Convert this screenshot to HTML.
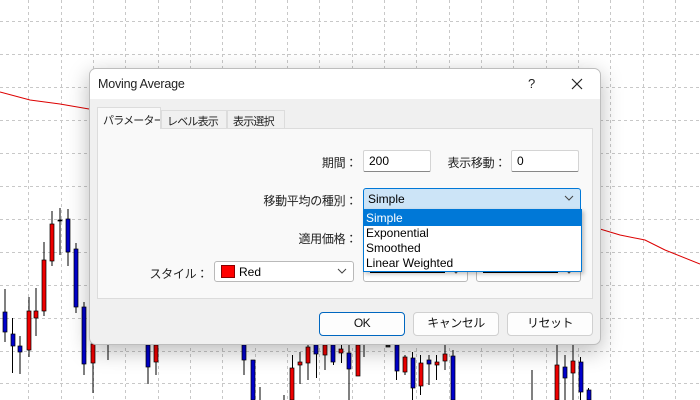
<!DOCTYPE html>
<html><head><meta charset="utf-8"><style>
*{margin:0;padding:0;box-sizing:border-box}
body{width:700px;height:400px;overflow:hidden;background:#fff;position:relative;font-family:"Liberation Sans","Noto Sans CJK JP",sans-serif;font-size:12px;color:#000}
.a{position:absolute}
.lbl{position:absolute;font-size:12px;color:#222;white-space:nowrap;text-align:right;letter-spacing:-0.3px}
.inp{position:absolute;background:#fff;border:1px solid #d4d4d4;border-bottom:1px solid #888;font-size:12px;padding:3px 0 0 5px;border-radius:2px}
.cb{position:absolute;background:#fff;border:1px solid #b9b9b9;border-radius:3px}
.chev{position:absolute;right:6px;top:5px;width:10px;height:8px}
.btn{position:absolute;background:#fdfdfd;border:1px solid #d0d0d0;border-radius:4px;text-align:center;font-size:12px;line-height:21px;color:#111;letter-spacing:-0.5px}
.tab{position:absolute;white-space:nowrap;font-size:11px;letter-spacing:-0.8px;color:#222;border:1px solid #dcdcdc;border-bottom:none;overflow:hidden}
</style></head><body>
<svg class="a" style="left:0;top:0" width="700" height="400">
<g stroke="#c8c8c8" stroke-dasharray="3,3" stroke-width="1">
<line x1="28.5" y1="0" x2="28.5" y2="400"/><line x1="61.5" y1="0" x2="61.5" y2="400"/><line x1="93.5" y1="0" x2="93.5" y2="400"/><line x1="125.5" y1="0" x2="125.5" y2="400"/><line x1="158.5" y1="0" x2="158.5" y2="400"/><line x1="190.5" y1="0" x2="190.5" y2="400"/><line x1="222.5" y1="0" x2="222.5" y2="400"/><line x1="255.5" y1="0" x2="255.5" y2="400"/><line x1="287.5" y1="0" x2="287.5" y2="400"/><line x1="319.5" y1="0" x2="319.5" y2="400"/><line x1="352.5" y1="0" x2="352.5" y2="400"/><line x1="384.5" y1="0" x2="384.5" y2="400"/><line x1="416.5" y1="0" x2="416.5" y2="400"/><line x1="449.5" y1="0" x2="449.5" y2="400"/><line x1="481.5" y1="0" x2="481.5" y2="400"/><line x1="513.5" y1="0" x2="513.5" y2="400"/><line x1="546.5" y1="0" x2="546.5" y2="400"/><line x1="578.5" y1="0" x2="578.5" y2="400"/><line x1="610.5" y1="0" x2="610.5" y2="400"/><line x1="643.5" y1="0" x2="643.5" y2="400"/><line x1="675.5" y1="0" x2="675.5" y2="400"/>
<line x1="0" y1="21.5" x2="700" y2="21.5"/><line x1="0" y1="54.5" x2="700" y2="54.5"/><line x1="0" y1="87.5" x2="700" y2="87.5"/><line x1="0" y1="120.5" x2="700" y2="120.5"/><line x1="0" y1="153.5" x2="700" y2="153.5"/><line x1="0" y1="186.5" x2="700" y2="186.5"/><line x1="0" y1="219.5" x2="700" y2="219.5"/><line x1="0" y1="252.5" x2="700" y2="252.5"/><line x1="0" y1="285.5" x2="700" y2="285.5"/><line x1="0" y1="318.5" x2="700" y2="318.5"/><line x1="0" y1="351.5" x2="700" y2="351.5"/><line x1="0" y1="383.5" x2="700" y2="383.5"/>
</g>
<polyline points="0,92 30,100 60,104 89,109" fill="none" stroke="#d00" stroke-width="1"/>
<polyline points="590,226 620,235 645,240 665,250 700,264" fill="none" stroke="#d00" stroke-width="1"/>
<g stroke="#000" stroke-width="1">
<line x1="5" y1="289" x2="5" y2="342"/><line x1="12.5" y1="318" x2="12.5" y2="373"/><line x1="20" y1="336" x2="20" y2="374"/><line x1="29" y1="297" x2="29" y2="357"/><line x1="36" y1="288" x2="36" y2="336"/><line x1="44" y1="242" x2="44" y2="316"/><line x1="52" y1="211" x2="52" y2="266"/><line x1="60" y1="208" x2="60" y2="255"/><line x1="68" y1="209" x2="68" y2="266"/><line x1="76" y1="243" x2="76" y2="313"/><line x1="84" y1="302" x2="84" y2="375"/><line x1="93" y1="340" x2="93" y2="393"/>
<line x1="108" y1="345" x2="108" y2="360"/><line x1="148" y1="345" x2="148" y2="384"/><line x1="156" y1="345" x2="156" y2="375"/>
<line x1="244" y1="345" x2="244" y2="375"/><line x1="260" y1="387" x2="260" y2="400"/><line x1="284" y1="395" x2="284" y2="400"/><line x1="292.5" y1="355" x2="292.5" y2="400"/><line x1="300" y1="352" x2="300" y2="384"/><line x1="308" y1="345" x2="308" y2="380"/><line x1="316.5" y1="345" x2="316.5" y2="378"/><line x1="325" y1="345" x2="325" y2="370"/><line x1="333.5" y1="345" x2="333.5" y2="365"/><line x1="341.5" y1="345" x2="341.5" y2="363"/><line x1="349" y1="345" x2="349" y2="400"/><line x1="358" y1="345" x2="358" y2="376"/><line x1="364" y1="345" x2="364" y2="357"/><line x1="396.5" y1="345" x2="396.5" y2="380"/><line x1="405" y1="355" x2="405" y2="375"/><line x1="412.5" y1="352" x2="412.5" y2="400"/><line x1="420.5" y1="355" x2="420.5" y2="395"/><line x1="429" y1="355" x2="429" y2="385"/><line x1="436.5" y1="355" x2="436.5" y2="380"/><line x1="445" y1="345" x2="445" y2="370"/><line x1="453" y1="350" x2="453" y2="400"/><line x1="532" y1="370" x2="532" y2="400"/><line x1="557" y1="345" x2="557" y2="400"/><line x1="565" y1="355" x2="565" y2="400"/><line x1="573" y1="345" x2="573" y2="400"/><line x1="580.5" y1="357" x2="580.5" y2="400"/><line x1="588.5" y1="388" x2="588.5" y2="400"/>
</g>
<g stroke="#000" stroke-width="0.7">
<rect x="3" y="312" width="4" height="20" fill="#00c"/><rect x="11" y="334" width="4" height="12" fill="#00c"/><rect x="18" y="346" width="4" height="6" fill="#00c"/><rect x="27" y="311" width="4" height="39" fill="#e00"/><rect x="34" y="311" width="4" height="7" fill="#e00"/><rect x="42" y="260" width="4" height="51" fill="#e00"/><rect x="50" y="224" width="4" height="37" fill="#e00"/><rect x="58" y="220" width="4" height="1" fill="#000"/><rect x="66" y="219" width="4" height="33" fill="#00c"/><rect x="74" y="249" width="4" height="58" fill="#00c"/><rect x="82" y="307" width="4" height="57" fill="#00c"/><rect x="91" y="344" width="4" height="19" fill="#e00"/>
<rect x="146" y="345" width="4" height="22" fill="#00c"/><rect x="154" y="345" width="4" height="17" fill="#e00"/>
<rect x="242" y="345" width="4" height="15" fill="#00c"/><rect x="251" y="360" width="4" height="40" fill="#00c"/><rect x="290" y="368" width="4" height="32" fill="#e00"/><rect x="298" y="362" width="4" height="3" fill="#e00"/><rect x="306" y="347" width="4" height="16" fill="#e00"/><rect x="314" y="345" width="4" height="9" fill="#00c"/><rect x="323" y="345" width="4" height="10" fill="#e00"/><rect x="331" y="345" width="4" height="17" fill="#00c"/><rect x="339" y="349" width="4" height="4" fill="#e00"/><rect x="347" y="353" width="4" height="16" fill="#00c"/><rect x="356" y="345" width="4" height="31" fill="#e00"/><rect x="386" y="345" width="4" height="2" fill="#333"/><rect x="395" y="345" width="4" height="26" fill="#00c"/><rect x="403" y="357" width="4" height="15" fill="#e00"/><rect x="411" y="358" width="4" height="30" fill="#00c"/><rect x="419" y="363" width="4" height="23" fill="#e00"/><rect x="427" y="360" width="4" height="4" fill="#00c"/><rect x="435" y="362" width="4" height="3" fill="#e00"/><rect x="443" y="354" width="4" height="7" fill="#e00"/><rect x="451" y="356" width="4" height="44" fill="#00c"/><rect x="555" y="365" width="4" height="35" fill="#e00"/><rect x="563" y="367" width="4" height="11" fill="#00c"/><rect x="571" y="361" width="4" height="12" fill="#e00"/><rect x="579" y="362" width="4" height="30" fill="#00c"/><rect x="587" y="390" width="4" height="10" fill="#00c"/>
</g>
</svg>

<div class="a" style="left:89px;top:68px;width:512px;height:277px;background:#f0f0f0;border:1px solid #bdbdbd;border-radius:7px;box-shadow:0 6px 22px rgba(0,0,0,0.28);overflow:hidden">
  <div class="a" style="left:0;top:0;width:512px;height:30px;background:#fff"></div>
  <div class="a" style="left:8px;top:8px;font-size:12.5px;color:#222;letter-spacing:-0.2px">Moving Average</div>
  <div class="a" style="left:438px;top:7px;font-size:13px;color:#222">?</div>
  <svg class="a" style="left:481px;top:9px" width="12" height="12"><path d="M1 1L11 11M11 1L1 11" stroke="#222" stroke-width="1.2"/></svg>
  <div class="a" style="left:7px;top:59px;width:496px;height:171px;background:#f9f9f9;border:1px solid #dcdcdc"></div>
  <div class="tab" style="left:7px;top:38px;width:64px;height:22px;background:#f9f9f9;padding:4px 0 0 5px">パラメーター</div>
  <div class="tab" style="left:71px;top:41px;width:66px;height:18px;background:#f0f0f0;padding:2px 0 0 5px">レベル表示</div>
  <div class="tab" style="left:137px;top:41px;width:58px;height:18px;background:#f0f0f0;padding:2px 0 0 5px">表示選択</div>
</div>

<div class="lbl" style="left:300px;top:154px;width:57px">期間：</div>
<div class="inp" style="left:363px;top:150px;width:68px;height:22px">200</div>
<div class="lbl" style="left:430px;top:154px;width:76px">表示移動：</div>
<div class="inp" style="left:511px;top:150px;width:68px;height:22px">0</div>

<div class="lbl" style="left:220px;top:192px;width:137px">移動平均の種別：</div>
<div class="a" style="left:363px;top:188px;width:218px;height:22px;background:#cce4f7;border:1px solid #0078d7;border-radius:3px 3px 0 0;font-size:12px;padding:3px 0 0 4px">Simple
<svg class="chev" viewBox="0 0 10 8"><path d="M1 2L5 6L9 2" fill="none" stroke="#444" stroke-width="1"/></svg></div>

<div class="lbl" style="left:260px;top:230px;width:97px">適用価格：</div>

<div class="lbl" style="left:130px;top:265px;width:78px">スタイル：</div>
<div class="cb" style="left:214px;top:261px;width:140px;height:21px">
  <div class="a" style="left:6px;top:3px;width:14px;height:13px;background:#f00;border:1px solid #800"></div>
  <div class="a" style="left:24px;top:3px;font-size:12px">Red</div>
  <svg class="chev" viewBox="0 0 10 8"><path d="M1 2L5 6L9 2" fill="none" stroke="#444" stroke-width="1"/></svg>
</div>
<div class="cb" style="left:363px;top:261px;width:105px;height:21px">
  <div class="a" style="left:6px;top:9px;width:75px;height:2px;background:#000"></div>
  <svg class="chev" viewBox="0 0 10 8"><path d="M1 2L5 6L9 2" fill="none" stroke="#444" stroke-width="1"/></svg>
</div>
<div class="cb" style="left:476px;top:261px;width:105px;height:21px">
  <div class="a" style="left:6px;top:9px;width:75px;height:2px;background:#000"></div>
  <svg class="chev" viewBox="0 0 10 8"><path d="M1 2L5 6L9 2" fill="none" stroke="#444" stroke-width="1"/></svg>
</div>

<div class="a" style="left:363px;top:209px;width:219px;height:63px;background:#fff;border:1px solid #0078d7;box-shadow:2px 2px 4px rgba(0,0,0,0.25);font-size:12px;line-height:15px">
  <div style="background:#0078d7;color:#fff;padding-left:2px;height:16px;line-height:16px">Simple</div>
  <div style="padding-left:2px">Exponential</div>
  <div style="padding-left:2px">Smoothed</div>
  <div style="padding-left:2px">Linear Weighted</div>
</div>

<div class="btn" style="left:319px;top:312px;width:86px;height:24px;border:1px solid #0067c0;border-radius:4px">OK</div>
<div class="btn" style="left:413px;top:312px;width:86px;height:24px">キャンセル</div>
<div class="btn" style="left:507px;top:312px;width:86px;height:24px">リセット</div>
</body></html>
